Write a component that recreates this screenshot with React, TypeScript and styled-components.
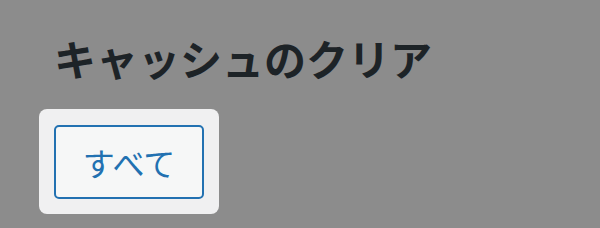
import React from 'react';
import styled, { createGlobalStyle } from 'styled-components';

const GlobalStyle = createGlobalStyle`
  html, body {
    margin: 0;
    padding: 0;
    background-color: #8c8c8c;
  }
  body {
    font-family: "Noto Sans CJK JP", "Noto Sans", sans-serif;
  }
`;

const Page = styled.div`
  width: 600px;
  height: 228px;
  box-sizing: border-box;
  padding: 33px 0 0 39px;
  display: flex;
  flex-direction: column;
  align-items: flex-start;
`;

const Heading = styled.h2`
  margin: 0 0 26px 15px;
  font-size: 42px;
  line-height: 50px;
  font-weight: 700;
  color: #1d2327;
  white-space: nowrap;
`;

const Panel = styled.div`
  background-color: #f0f0f1;
  border-radius: 8px;
  padding: 16px 15px 15px;
  display: flex;
`;

const ClearButton = styled.button`
  width: 150px;
  height: 74px;
  box-sizing: border-box;
  padding: 0;
  border: 2px solid #2271b1;
  border-radius: 5px;
  background-color: #f6f7f7;
  color: #2271b1;
  font-family: "Noto Sans CJK JP", "Noto Sans", sans-serif;
  font-size: 32px;
  line-height: 1;
  cursor: pointer;
`;

export default function App() {
  return (
    <>
      <GlobalStyle />
      <Page>
        <Heading>キャッシュのクリア</Heading>
        <Panel>
          <ClearButton>すべて</ClearButton>
        </Panel>
      </Page>
    </>
  );
}
